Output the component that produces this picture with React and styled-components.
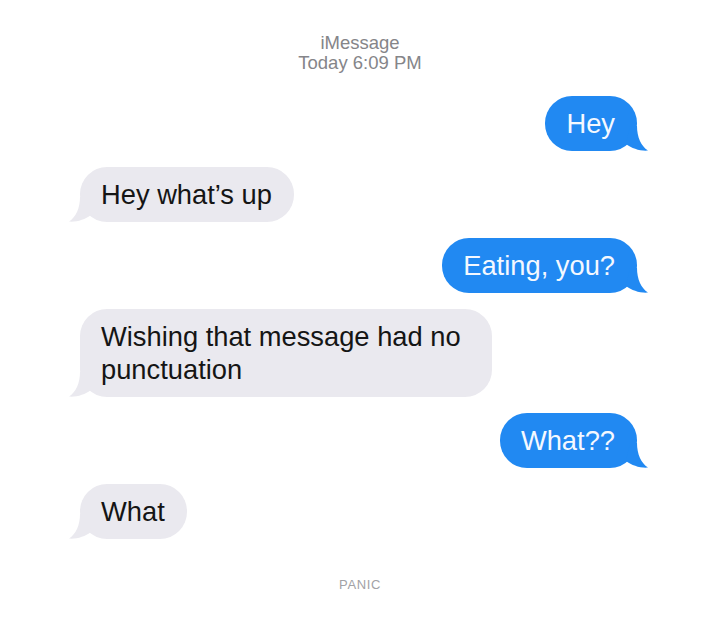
import React from 'react';
import styled, { createGlobalStyle } from 'styled-components';

const messages = [
  { id: 1, mine: true, text: 'Hey' },
  { id: 2, mine: false, text: 'Hey what’s up' },
  { id: 3, mine: true, text: 'Eating, you?' },
  { id: 4, mine: false, text: 'Wishing that message had no punctuation' },
  { id: 5, mine: true, text: 'What??' },
  { id: 6, mine: false, text: 'What' },
];

const Tail = ({ mine }) => (
  <TailShape $mine={mine} width='30' height='30' viewBox='0 0 30 30'>
    <path d='M 9 5 L 16 5 C 16 16 20 25 27 29.6 C 19 30.2 11 27.5 5 23 Z' />
  </TailShape>
);

const App = () => (
  <>
    <GlobalStyle />
    <Screen>
      <Header>
        <HeaderLine>iMessage</HeaderLine>
        <HeaderLine>Today 6:09 PM</HeaderLine>
      </Header>

      <Thread>
        {messages.map((m) => (
          <Bubble key={m.id} $mine={m.mine}>
            {m.text}
            <Tail mine={m.mine} />
          </Bubble>
        ))}
      </Thread>

      <Watermark>PANIC</Watermark>
    </Screen>
  </>
);

export default App;

const GlobalStyle = createGlobalStyle`
  html, body {
    margin: 0;
    padding: 0;
    background: #ffffff;
  }
  body {
    font-family: 'Liberation Sans', Arial, sans-serif;
  }
`;

const Screen = styled.div`
  width: 720px;
  height: 623px;
  display: flex;
  flex-direction: column;
  align-items: stretch;
  padding-top: 33px;
  box-sizing: border-box;
`;

const Header = styled.div`
  display: flex;
  flex-direction: column;
  align-items: center;
  color: #858589;
  font-size: 18.5px;
  line-height: 20px;
`;

const HeaderLine = styled.div`
  white-space: nowrap;
`;

const Thread = styled.div`
  display: flex;
  flex-direction: column;
  gap: 16px;
  padding: 23px 83px 0 80px;
`;

const Bubble = styled.div`
  position: relative;
  align-self: ${({ $mine }) => ($mine ? 'flex-end' : 'flex-start')};
  max-width: 412px;
  box-sizing: border-box;
  padding: 11px 22px 11px 21px;
  border-radius: 27px;
  font-size: 27.3px;
  line-height: 33px;
  background: ${({ $mine }) => ($mine ? '#2189f2' : '#eae9ef')};
  color: ${({ $mine }) => ($mine ? '#f4f8ff' : '#151515')};
`;

const TailShape = styled.svg`
  position: absolute;
  bottom: 0;
  ${({ $mine }) => ($mine ? 'right: -14px;' : 'left: -14px; transform: scaleX(-1);')}
  fill: ${({ $mine }) => ($mine ? '#2189f2' : '#eae9ef')};
  display: block;
`;

const Watermark = styled.div`
  margin-top: 38px;
  text-align: center;
  font-size: 13px;
  line-height: 16px;
  letter-spacing: 0.6px;
  color: #a2a2a6;
`;
